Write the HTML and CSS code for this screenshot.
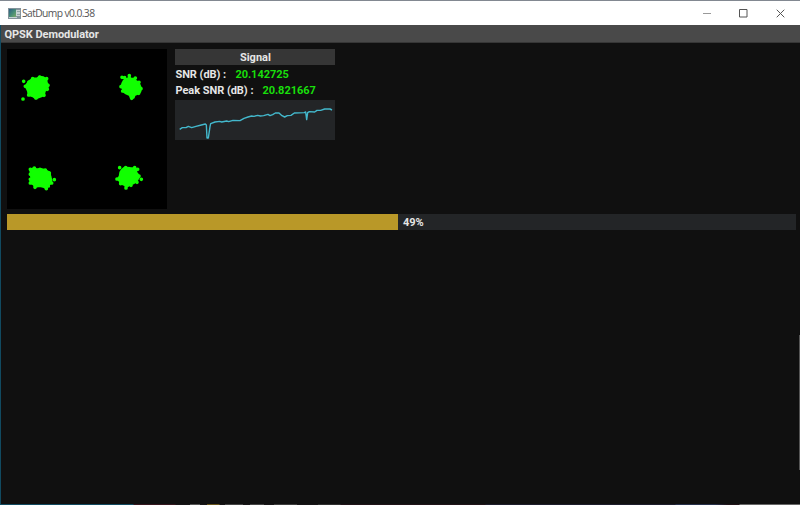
FILE: index.html
```
<!DOCTYPE html>
<html lang="en">
<head>
<meta charset="utf-8">
<title>SatDump v0.0.38</title>
<link rel="stylesheet" href="styles.css">
</head>
<body>
<div class="window">
  <header class="titlebar">
    <svg class="app-icon" viewBox="0 0 13 11">
      <defs><linearGradient id="sky" x2="1" y2="1"><stop stop-color="#315b86"/><stop offset=".5" stop-color="#438a78"/><stop offset="1" stop-color="#79a968"/></linearGradient></defs>
      <path fill="#83939b" d="M0 0h13v11H0z"/>
      <path fill="url(#sky)" d="M1 1h7v8H1z"/>
      <path fill="#c5d2d3" d="M8 2h4v6H8zM1 9h8v1H1z"/>
      <path fill="#8fa3a5" d="M9 3h3v1H9zM9 6h3v1H9z"/>
    </svg>
    <span class="app-title">SatDump v0.0.38</span>
    <div class="controls">
      <svg class="minimize" viewBox="0 0 9 9"><path d="M1 4.5h8"/></svg>
      <svg viewBox="0 0 9 9"><path d="M.5 .5h7.5v7.5H.5z"/></svg>
      <svg viewBox="0 0 9 9"><path d="M.7 .7l7.6 7.6M8.3 .7L.7 8.3"/></svg>
    </div>
  </header>
  <div class="panel-title">QPSK Demodulator</div>
  <main class="content">
    <div class="top">
      <svg class="constellation" viewBox="7 49 160 160">
        <g transform="translate(0 45) scale(.33333)">
          <path d="M77 123L86 110L97 101L112 100L118 95L130 97L139 102L140 112L145 122L141 132L134 139L132 150L122 155L108 160L99 154L86 150L84 138Z"/>
          <path class="dot" d="M71 109h0M69 162h0M140 101h0M144 121h0M142 133h0M119 96h0M98 101h0M87 111h0M76 124h0M86 150h0M108 159h0M132 151h0"/>
        </g>
        <g transform="translate(90 45) scale(.33333)">
          <path d="M94 125L98 113L102 106L108 102L114 101L117 95L123 101L134 101L136 107L145 112L149 120L153 130L151 140L144 146L134 150L131 158L122 158L119 150L106 144L101 140L99 132Z"/>
          <path class="dot" d="M96 97h0M104 98h0M118 92h0M136 99h0M125 160h0M93 125h0M147 112h0M153 131h0M146 145h0M98 138h0"/>
        </g>
        <g transform="translate(0 140) scale(.33333)">
          <path d="M91 88L95 87L103 85L112 88L122 87L136 90L149 98L151 109L154 120L153 129L147 134L141 139L138 144L132 141L120 138L105 140L101 134L92 129L91 125L94 115L92 100Z"/>
          <path class="dot" d="M163 119h0M139 146h0M105 142h0M103 84h0M91 88h0M91 103h0M91 118h0M91 129h0M120 88h0M136 90h0M148 99h0M155 129h0M145 138h0"/>
        </g>
        <g transform="translate(90 140) scale(.33333)">
          <path d="M102 84L110 83L121 84L136 85L140 89L138 96L144 104L147 111L143 118L138 125L130 130L121 134L108 141L104 135L92 130L89 123L83 117L89 109L91 97L96 89Z"/>
          <path class="dot" d="M89 83h0M154 118h0M108 144h0M143 88h0M141 127h0M134 83h0M107 83h0M81 117h0M92 131h0M123 136h0M147 108h0"/>
        </g>
      </svg>
      <section class="signal">
        <h2 class="signal-title">Signal</h2>
        <div class="reading"><span class="label snr">SNR (dB) :</span><span class="value">20.142725</span></div>
        <div class="reading"><span class="label peak">Peak SNR (dB) :</span><span class="value">20.821667</span></div>
        <svg class="plot" viewBox="17 165 480 120">
          <path d="M31 253L39 248L50 248L57 244L67 248L80 244L96 240L108 237L111 240L113 279L117 279L122 245L124 236L137 231L151 229L157 231L172 228L178 230L191 226L212 227L224 220L236 216L247 213L254 214L265 211L273 213L283 212L296 208L302 212L310 209L318 204L329 204L338 212L346 216L354 212L365 211L375 204L405 203L409 201L412 224L415 203L420 200L436 201L443 196L454 196L466 192L482 192L488 195"/>
        </svg>
      </section>
    </div>
    <div class="progress"><div class="fill"></div><span class="percent">49%</span></div>
  </main>
  <div class="edge-right"></div>
  <div class="edge-bottom"></div>
</div>
</body>
</html>
```
FILE: styles.css
```
* { box-sizing: border-box; }
body { margin: 0; overflow: hidden; background: #101010; }
.window {
  position: relative;
  height: 505px;
  border-left: 1px solid #114a60;
  background: #101010;
  color: #e6e6e6;
  font: 700 11px/16px Roboto, sans-serif;
}
.titlebar {
  display: flex;
  align-items: center;
  height: 25px;
  margin-left: -1px;
  padding: 0 15px 0 8px;
  border-top: 1px solid #828891;
  background: #fff;
}
.app-icon { width: 13px; height: 11px; }
.app-title { margin-left: 1px; color: #555; font: 400 10.3px/16px "Open Sans", sans-serif; letter-spacing: -.6px; }
.controls { display: flex; gap: 28px; margin-left: auto; }
.controls svg { width: 9px; height: 9px; fill: none; stroke: #555; stroke-width: 1; }
.controls .minimize { stroke: #999; }
.panel-title {
  height: 18px;
  padding-left: 3.5px;
  border-bottom: 1px solid #363636;
  background: #494949;
  line-height: 19px;
  letter-spacing: -.05px;
}
.content { padding: 6px 4px 0 6px; }
.top { display: flex; gap: 8.4px; height: 160px; }
.constellation { width: 160px; height: 160px; background: #000; fill: #1f0; stroke: #1f0; stroke-width: 6; stroke-linejoin: round; stroke-linecap: round; }
.constellation .dot { stroke-width: 11; }
.signal { width: 160px; }
.signal-title { height: 16px; margin: 0 0 2px; background: #363636; font: inherit; line-height: 18px; text-align: center; }
.reading { display: flex; height: 16px; line-height: 17px; letter-spacing: -.03px; }
.label { white-space: nowrap; }
.snr { width: 60px; }
.peak { width: 87px; }
.value { color: #19df0b; }
.reading { line-height: 16px; }
.plot { display: block; width: 160px; height: 40px; margin-top: 1px; background: #232527; }
.plot path { fill: none; stroke: #43b8cc; stroke-width: 4.2; stroke-linejoin: round; }
.progress { display: flex; height: 16px; margin-top: 5px; background: #232527; }
.fill { width: 391px; background: #b99828; }
.percent { margin-left: 5px; line-height: 17px; }
.edge-right { position: absolute; right: 0; top: 335px; width: 1px; height: 135px; background: #555; }
.edge-bottom {
  position: absolute;
  left: -1px;
  right: 0;
  bottom: 0;
  height: 1px;
  background: linear-gradient(90deg, #114a60 0 133px, #35161e 134px 175px, #171517 176px 190px, #555 190px 200px, #171517 200px 207px, #66531b 207px 219px, #171517 220px 225px, #444 225px 243px, #171517 243px 250px, #444 250px 264px, #171517 264px 274px, #3d3d3d 274px 297px, #171517 297px 318px, #303030 318px 340px, #201318 341px 485px, #1d1d2c 486px 675px, #26304a 676px 715px, #201318 728px 739px, #666 740px);
}
```
